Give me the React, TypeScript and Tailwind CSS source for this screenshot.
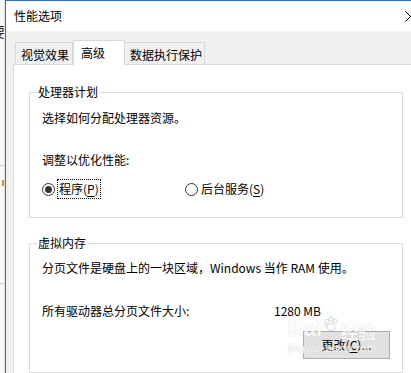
import React from 'react';

const Radio = ({ checked }: { checked?: boolean }) => (
  <span className="w-[13px] h-[13px] rounded-full border border-[#333] bg-white flex items-center justify-center shrink-0">
    {checked && <span className="w-[7px] h-[7px] rounded-full bg-[#333]" />}
  </span>
);

export default function App() {
  return (
    <div className="relative w-[411px] h-[373px] overflow-hidden flex bg-white text-black text-[12px] leading-[16px] font-['Microsoft_YaHei','Noto_Sans_CJK_SC',sans-serif]">
      {/* window behind the dialog */}
      <div className="w-[5px] shrink-0 bg-[#f7f7f7] overflow-hidden flex flex-col border-r border-[#e2e2e2]">
        <span className="mt-[24px] -ml-[9px] text-[14px] leading-[14px] text-[#222]">要</span>
        <div className="mt-[127px] h-px bg-[#d0d0d0]" />
        <span className="mt-[14px] ml-[2px] w-[2px] h-[6px] bg-[#e08a2e]" />
        <div className="mt-[97px] h-px bg-[#d0d0d0]" />
      </div>

      {/* dialog */}
      <div className="flex-1 min-w-0 flex flex-col border-l border-t border-[#1f77c9]">
        <div className="h-[30px] shrink-0 bg-white flex items-center justify-between pl-[8px]">
          <span className="text-[12px]">性能选项</span>
          <svg width="11" height="11" viewBox="0 0 11 11" className="-mr-[5px]">
            <path d="M0.5 0.5 L10.5 10.5 M10.5 0.5 L0.5 10.5" stroke="#000" strokeWidth="1" />
          </svg>
        </div>

        <div className="flex-1 bg-[#f0f0f0] flex flex-col pl-[7px]">
          {/* tabs */}
          <div className="relative z-10 mt-[9px] ml-[2px] h-[24px] flex items-end">
            <div className="w-[58px] h-[22px] border-t border-l border-r border-[#d9d9d9] bg-[#f0f0f0] flex items-center pl-[5px] pt-[2px]">
              视觉效果
            </div>
            <div className="w-[52px] h-[25px] -mb-px border-t border-l border-r border-[#d9d9d9] bg-white flex items-center pl-[7px]">
              高级
            </div>
            <div className="w-[80px] h-[22px] border-t border-r border-[#d9d9d9] bg-[#f0f0f0] flex items-center pl-[5px] pt-[2px]">
              数据执行保护
            </div>
          </div>

          {/* tab panel */}
          <div className="flex-1 bg-white border-l border-t border-[#d9d9d9] pl-[15px]">
            <fieldset className="mt-[19px] w-[374px] h-[134px] border border-[#dcdcdc] p-0 m-0">
              <legend className="ml-[7px] px-[1px] leading-[16px]">处理器计划</legend>
              <div className="pt-[10px] pl-[12px]">
                <div>选择如何分配处理器资源。</div>
                <div className="mt-[26px]">调整以优化性能:</div>
                <div className="mt-[11px] h-[20px] flex items-center">
                  <div className="w-[143px] flex items-center">
                    <Radio checked />
                    <span className="ml-[2px] h-[20px] px-[1px] border border-dotted border-black flex items-center">
                      程序(<span className="underline underline-offset-2">P</span>)
                    </span>
                  </div>
                  <div className="flex items-center">
                    <Radio />
                    <span className="ml-[3px]">
                      后台服务(<span className="underline underline-offset-2">S</span>)
                    </span>
                  </div>
                </div>
              </div>
            </fieldset>

            <fieldset className="mt-[17px] w-[374px] h-[138px] border border-[#dcdcdc] p-0 m-0">
              <legend className="ml-[7px] px-[1px] leading-[16px]">虚拟内存</legend>
              <div className="pt-[9px] pl-[12px]">
                <div>分页文件是硬盘上的一块区域，Windows 当作 RAM 使用。</div>
                <div className="mt-[27px] flex">
                  <span className="w-[232px]">所有驱动器总分页文件大小:</span>
                  <span>1280 MB</span>
                </div>
                <button className="mt-[12px] ml-[261px] w-[87px] h-[28px] bg-[#e1e1e1] border border-[#adadad] flex items-center justify-center">
                  更改(<span className="underline underline-offset-2">C</span>)...
                </button>
              </div>
            </fieldset>
          </div>
        </div>
      </div>

      {/* baidu jingyan watermark */}
      <div className="absolute left-[280px] top-[316px] w-[104px] h-[52px] pointer-events-none flex flex-col items-center text-white [text-shadow:0_0_1px_#b5b5b5] opacity-80">
        <div className="flex items-end leading-none">
          <span className="text-[22px] font-bold font-['Liberation_Sans',sans-serif]">Bai</span>
          <svg width="16" height="16" viewBox="0 0 16 16" className="mb-[8px] mx-[1px]">
            <g fill="#fff" stroke="#c4c4c4" strokeWidth="0.8">
              <circle cx="4" cy="5" r="2" />
              <circle cx="8" cy="3" r="2" />
              <circle cx="12" cy="5" r="2" />
              <circle cx="2.5" cy="9" r="1.6" />
              <ellipse cx="8" cy="11" rx="4" ry="3.5" />
            </g>
          </svg>
          <span className="text-[18px] font-bold">经验</span>
        </div>
        <span className="mt-[2px] text-[11px] leading-[12px] font-['Liberation_Sans',sans-serif]">jingyan.baidu.com</span>
      </div>
    </div>
  );
}
